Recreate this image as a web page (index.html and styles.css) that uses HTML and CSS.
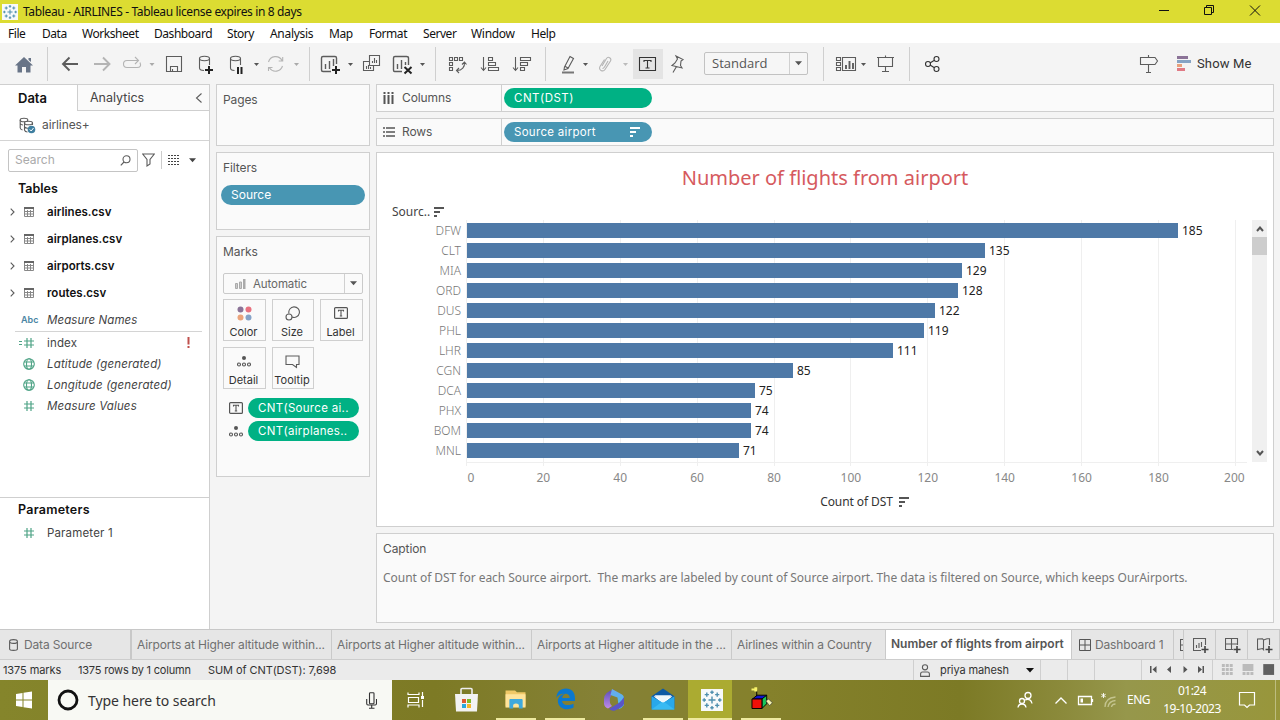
FILE: index.html
```html
<!DOCTYPE html>
<html lang="en">
<head>
<meta charset="utf-8">
<title>Tableau - AIRLINES</title>
<link rel="stylesheet" href="styles.css">
</head>
<body>
<svg class="defs" width="0" height="0">
  <defs>
    <symbol id="caret" viewBox="0 0 8 5"><path d="M0 0H8L4 4.6Z"/></symbol>
    <symbol id="table" viewBox="0 0 10 10"><path d="M.5 1V9.5H9.5V1M.5 4.500H9.5M.5 7H9.5M3.5 3V9.5M6.5 3V9.5" fill="none" stroke="#888"/><path d="M0 0H10V2H0Z" fill="#666"/></symbol>
    <symbol id="tbox" viewBox="0 0 14 12"><rect x=".6" y=".6" width="12.8" height="10.8" rx="1" fill="none" stroke="#555" stroke-width="1.2"/><path d="M4.5 4.5V3.2H9.5V4.5M7 3.2V9M5.8 9H8.2" fill="none" stroke="#555" stroke-width="1.1"/></symbol>
    <symbol id="detail" viewBox="0 0 14 11"><circle cx="7" cy="2" r="2" fill="#555"/><g fill="none" stroke="#555" stroke-width="1.1"><circle cx="2" cy="8.5" r="1.5"/><circle cx="7" cy="8.5" r="1.5"/><circle cx="12" cy="8.5" r="1.5"/></g></symbol>
    <symbol id="sort" viewBox="0 0 10 10"><path d="M0 0H10V2H0ZM0 4H6V6H0ZM0 8H3V10H0Z"/></symbol>
    <symbol id="hash" viewBox="0 0 12 12"><path d="M4 1V11M8 1V11M1 4H11M1 8H11" fill="none" stroke="#4fa386" stroke-width="1.2"/></symbol>
    <symbol id="globe" viewBox="0 0 12 12"><g fill="none" stroke="#4fa386" stroke-width="1.1"><circle cx="6" cy="6" r="5.3"/><ellipse cx="6" cy="6" rx="2.5" ry="5.3"/><path d="M1 4H11M1 8H11"/></g></symbol>
    <symbol id="grid4" viewBox="0 0 12 12"><path d="M.5.5H11.5V11.5H.5ZM6 .5V11.5M.5 6H11.5" fill="none" stroke="#555"/></symbol>
    <symbol id="logo" viewBox="0 0 22 22"><rect width="22" height="22" fill="#f7f9fa"/><g fill="none" stroke="#4f8fae" stroke-width="1.4"><path d="M11 7.5V14.5M7.5 11H14.5"/><path d="M11 1.5V5M9.3 3.2H12.7M11 17V20.5M9.3 18.8H12.7M1.5 11H5M3.2 9.3V12.7M17 11H20.500M18.800 9.300V12.700M5.800 3.500V7.700M3.700 5.600H7.900M16.200 3.500V7.700M14.100 5.600H18.300M5.800 14.300V18.500M3.700 16.400H7.900M16.200 14.300V18.500M14.100 16.400H18.300"/></g></symbol>
  </defs>
</svg>

<header class="titlebar">
  <svg class="app-logo" width="16" height="16"><use href="#logo"/></svg>
  <span class="window-title">Tableau - AIRLINES - Tableau license expires in 8 days</span>
  <svg class="window-buttons" width="140" height="23" viewBox="1140 0 140 23" fill="none" stroke="#111"><path d="M1159 10.500H1169M1204.500 7.500H1211.500V14.500H1204.500ZM1206.500 7V5.500H1213.500V12.500H1212M1250 5.500L1260 15.500M1260 5.500L1250 15.500"/></svg>
</header>

<nav class="menubar">
  <span class="m1">File</span><span class="m2">Data</span><span class="m3">Worksheet</span><span class="m4">Dashboard</span><span class="m5">Story</span><span class="m6">Analysis</span><span class="m7">Map</span><span class="m8">Format</span><span class="m9">Server</span><span class="m10">Window</span><span class="m11">Help</span>
</nav>

<div class="toolbar">
  <svg width="47" height="41" viewBox="0 43 47 41"><path d="M24 57L33 65.500H30.500V72.500H26V67H22V72.500H17.500V65.500H15ZM28.500 58H31V62L28.500 60Z" fill="#687487"/></svg>
  <i class="sep"></i>
  <svg width="38" height="41" viewBox="48 43 38 41"><path d="M78 64H63M69.500 57.500L63 64L69.500 70.500" class="k thick"/></svg>
  <svg width="30" height="41" viewBox="86 43 30 41"><path d="M94 64H109M103 57.500L109.500 64L103 70.500" class="k thick off"/></svg>
  <svg width="44" height="41" viewBox="116 43 44 41"><path d="M129 67.500H127A3.500 3.500 0 0 1 127 60.500H138M135 57L138.500 60.500L135 64M140 62.500Q142 67.500 137 67.500H129" class="k off"/><path d="M149.500 63H154.500L152 66Z" fill="#aaa"/></svg>
  <svg width="32" height="41" viewBox="160 43 32 41"><path d="M166.500 56.500H181.500V71.500H166.500ZM170.500 71.500V66.500H177.500V71.500M172.500 69V71.500" class="k"/></svg>
  <svg width="30" height="41" viewBox="192 43 30 41"><g class="k"><ellipse cx="204.500" cy="58.500" rx="5" ry="2.200"/><path d="M199.500 58.500V68C199.500 69.500 201 70.500 204 70.500M209.500 58.500V65"/></g><path d="M209 66V74M205 70H213" stroke="#222" stroke-width="2"/></svg>
  <svg width="40" height="41" viewBox="222 43 40 41"><g class="k"><ellipse cx="235.500" cy="58.500" rx="5" ry="2.200"/><path d="M230.500 58.500V68C230.500 69.500 232 70.500 234.500 70.500M240.500 58.500V65"/></g><path d="M238 67V74M241.500 67V74" stroke="#222" stroke-width="2"/><path d="M254 63H259L256.500 66Z" fill="#555"/></svg>
  <svg width="47" height="41" viewBox="262 43 47 41"><path d="M268.500 62A7.300 7.300 0 0 1 282 60.500M282.500 66A7.300 7.300 0 0 1 269.500 68M282.700 57V61H278.700M268.500 71V67.500H272.500" class="k off"/><path d="M294 63H299L296.500 66Z" fill="#aaa"/></svg>
  <i class="sep"></i>
  <svg width="50" height="41" viewBox="310 43 50 41"><path d="M331 71.500H323Q321.500 71.500 321.500 70V58Q321.500 56.500 323 56.500H335Q336.500 56.500 336.500 58V64M325.500 64V69M329.500 61V69M333.500 59V66" class="k bold"/><path d="M336 66V74M332 70H340" stroke="#222" stroke-width="2"/><path d="M348 63H353L350.500 66Z" fill="#555"/></svg>
  <svg width="28" height="41" viewBox="360 43 28 41"><path d="M369.500 55.500H379.500V65.500H369.500ZM372.500 63V61M374.500 63V58M376.500 63V60M369 61.500H363.500V70.500H373.500V66M366.500 69V66M368.500 69V65M370.500 69V67" class="k"/></svg>
  <svg width="47" height="41" viewBox="388 43 47 41"><path d="M402 71.500H394.500Q393.500 71.500 393.500 70V58Q393.500 56.500 395 56.500H406.500Q408.500 56.500 408.500 58V65M397.500 64V69M401.500 60V69M405.500 62V65" class="k bold"/><path d="M404.500 67L411.500 73.500M411.500 67L404.500 73.500" stroke="#222" stroke-width="2"/><path d="M420 63H425L422.500 66Z" fill="#555"/></svg>
  <i class="sep"></i>
  <svg width="40" height="41" viewBox="436 43 40 41"><path d="M449.500 57.500H452.500V60.500H449.500ZM454.500 57.500H457.500V60.500H454.500ZM459.500 57.500H462.500V60.500H459.500ZM449.500 62.500H452.500V65.500H449.500ZM449.500 67.500H452.500V70.500H449.500ZM464.500 62C465 67 462 70.500 457 70.500M462 64.500L464.500 62L466.500 64.500M459 68L456.500 70.500L459 73" class="k"/></svg>
  <svg width="32" height="41" viewBox="476 43 32 41"><path d="M483.500 57V70M481 67.500L483.500 70.500L486 67.500M488.500 57.500H492.500V60.500H488.500ZM488.500 62.500H495.500V65.500H488.500ZM488.500 67.500H498.500V70.500H488.500Z" class="k"/></svg>
  <svg width="37" height="41" viewBox="508 43 37 41"><path d="M515.500 57V70M513 67.500L515.500 70.500L518 67.500M520.500 57.500H530.500V60.500H520.500ZM520.500 62.500H527.500V65.500H520.500ZM520.500 67.500H524.500V70.500H520.500Z" class="k"/></svg>
  <i class="sep"></i>
  <svg width="46" height="41" viewBox="546 43 46 41"><path d="M564.500 67L570 56.500L573.500 58.500L568 68.500L564 70Z M564.500 66L568 68" class="k"/><path d="M562 72.500H574" stroke="#777" stroke-width="2"/><path d="M583 63H588L585.500 66Z" fill="#555"/></svg>
  <svg width="41" height="41" viewBox="592 43 41 41"><path d="M602 66L606.500 58.500C608 56 612 58 610.500 61L605 69.500C603 72.500 598 70 600 66.500L604.500 59.500M602.500 68.500C604 69 604.500 67 608 61" class="k off"/><path d="M623 63H628L625.500 66Z" fill="#bbb"/></svg>
  <svg class="pressed" width="30" height="30" viewBox="633 49 30 30"><path d="M639.500 57.500H655.500V70.500H639.500ZM644 62V60.500H651V62M647.500 60.500V68M645.500 68H649.500" class="k dark"/></svg>
  <svg width="41" height="41" viewBox="663 43 41 41"><path d="M676 56.500L683 60L681 61.500L680.500 66L682 68.500L672 66L675 63.500L677.500 59.500ZM676.500 67L673 73" class="k" transform="translate(0 -.5)"/></svg>
  <div class="fit-select"><span>Standard</span><b><svg width="7" height="5"><use href="#caret"/></svg></b></div>
  <div class="gap15"></div>
  <i class="sep"></i>
  <svg width="46" height="41" viewBox="824 43 46 41"><path d="M836.500 57.500H840.500V60.500H836.500ZM836.500 62.500H840.500V65.500H836.500ZM836.500 67.500H840.500V70.500H836.500ZM842.500 57.500H855.500V70.500H842.500Z" class="k"/><path d="M846 69V65M849.500 69V61M853 69V63" class="k thick"/><path d="M861 63H866L863.500 66Z" fill="#555"/></svg>
  <svg width="39" height="41" viewBox="870 43 39 41"><path d="M877 57.500H894M878.500 57.500V66.500H892.500V57.500M885.500 55.500V57M885.500 66.500V71.500M882 71.500H889" class="k"/></svg>
  <i class="sep"></i>
  <svg width="45" height="41" viewBox="910 43 45 41"><g class="k dark"><circle cx="928" cy="64" r="2.500"/><circle cx="936.500" cy="59" r="2.500"/><circle cx="936.500" cy="69" r="2.500"/><path d="M930 63L934 60.500M930 65L934 67.500"/></g></svg>
  <div class="spacer"></div>
  <svg width="36" height="41" viewBox="1136 43 36 41"><path d="M1140.500 57.500H1155L1157.500 61L1155 64.500H1140.500ZM1148.500 55V57M1148.500 65V72.500M1146 72.500H1151" class="k"/></svg>
  <svg width="23" height="41" viewBox="1172 43 23 41"><path d="M1177 56H1188V59H1177Z" fill="#8b7397"/><path d="M1177 60H1191V63H1177Z" fill="#86a3c4"/><path d="M1177 64H1182V67H1177Z" fill="#e8a17c"/><path d="M1177 68H1185V71H1177Z" fill="#e07a85"/></svg>
  <span class="show-me">Show Me</span>
</div>

<main class="workspace">
  <aside class="data-pane">
    <div class="pane-tabs"><b>Data</b><div class="analytics"><span>Analytics</span><svg width="8" height="10" viewBox="0 0 8 10"><path d="M6.500 .5L1.500 5L6.500 9.500" class="k"/></svg></div></div>
    <div class="source"><svg width="17" height="17" viewBox="0 0 17 17"><g class="k"><ellipse cx="5" cy="3" rx="3.800" ry="1.800"/><path d="M1.200 3V11Q1.500 12.500 3.500 13M1.200 6.500Q2 8 4 8"/><ellipse cx="9.500" cy="6" rx="4" ry="1.800" fill="#fff"/><path d="M5.500 6V13Q6 15 8.500 15M13.500 6V8M5.500 10Q7 11.500 9 11.300"/></g><circle cx="12.500" cy="12.500" r="3.800" fill="#3f7fa0"/><path d="M10.800 12.500L12.200 14L14.500 11" stroke="#fff" fill="none"/></svg><span>airlines+</span></div>
    <div class="search-row">
      <div class="search"><span>Search</span><svg width="11" height="11" viewBox="0 0 11 11"><circle cx="6.500" cy="4.300" r="3.500" class="k"/><path d="M4 7L.8 10.300" class="k"/></svg></div>
      <svg width="13" height="14" viewBox="0 0 13 14"><path d="M.7 1H12.300L8 6.500V11L5 13V6.500Z" class="k"/></svg>
      <i></i>
      <svg width="12" height="10" viewBox="0 0 12 10"><path d="M0 .5H12M0 3.500H12M0 6.500H12M0 9.500H12" stroke="#444" stroke-dasharray="2 1"/></svg>
      <svg class="dd" width="7" height="5"><use href="#caret"/></svg>
    </div>
    <h3 class="pane-h">Tables</h3>
    <div class="tbl"><svg class="chev" width="5" height="8" viewBox="0 0 5 8"><path d="M.7.7L4 4L.7 7.300" class="k"/></svg><svg width="10" height="10"><use href="#table"/></svg><b>airlines.csv</b></div>
    <div class="tbl"><svg class="chev" width="5" height="8" viewBox="0 0 5 8"><path d="M.7.7L4 4L.7 7.300" class="k"/></svg><svg width="10" height="10"><use href="#table"/></svg><b>airplanes.csv</b></div>
    <div class="tbl"><svg class="chev" width="5" height="8" viewBox="0 0 5 8"><path d="M.7.7L4 4L.7 7.300" class="k"/></svg><svg width="10" height="10"><use href="#table"/></svg><b>airports.csv</b></div>
    <div class="tbl"><svg class="chev" width="5" height="8" viewBox="0 0 5 8"><path d="M.7.7L4 4L.7 7.300" class="k"/></svg><svg width="10" height="10"><use href="#table"/></svg><b>routes.csv</b></div>
    <div class="field names"><span class="abc">Abc</span><em>Measure Names</em></div>
    <div class="field"><svg width="16" height="12" viewBox="-4 0 16 12"><path d="M-4 4.500H-1M-4 7.500H-1" stroke="#4fa386"/><use href="#hash" width="12" height="12"/></svg><span>index</span><svg class="warn" width="3" height="11" viewBox="0 0 3 11"><path d="M.5 0H2.500V7.500H.5ZM.5 9H2.500V11H.5Z" fill="#c0504d"/></svg></div>
    <div class="field"><svg width="12" height="12"><use href="#globe"/></svg><em>Latitude (generated)</em></div>
    <div class="field"><svg width="12" height="12"><use href="#globe"/></svg><em>Longitude (generated)</em></div>
    <div class="field"><svg width="12" height="12"><use href="#hash"/></svg><em>Measure Values</em></div>
    <div class="params">
      <h3 class="pane-h">Parameters</h3>
      <div class="field"><svg width="12" height="12"><use href="#hash"/></svg><span>Parameter 1</span></div>
    </div>
  </aside>

  <section class="cards">
    <div class="card pages"><h4>Pages</h4></div>
    <div class="card filters"><h4>Filters</h4><div class="pill blue">Source</div></div>
    <div class="card marks"><h4>Marks</h4>
      <div class="mark-type"><svg width="11" height="10" viewBox="0 0 11 10"><path d="M.5 4.500H2.500V9.500H.5ZM4.500 3H6.500V9.500H4.500Z" fill="#ccc" stroke="#aaa"/><path d="M8 0H10.500V10H8Z" fill="#aaa"/></svg><span>Automatic</span><b><svg width="7" height="5"><use href="#caret"/></svg></b></div>
      <div class="mark-grid">
        <div><svg width="15" height="15" viewBox="0 0 15 15"><circle cx="3.500" cy="3.500" r="3" fill="#8b7397"/><circle cx="11.500" cy="3.500" r="3" fill="#e8717f"/><circle cx="3.500" cy="11.500" r="3" fill="#eba47c"/><circle cx="11.500" cy="11.500" r="3" fill="#86a3c8"/></svg><span>Color</span></div>
        <div><svg width="15" height="15" viewBox="0 0 15 15"><g class="k"><path d="M4 7.500A5.300 5.300 0 1 1 7 11"/><circle cx="4" cy="11" r="3"/></g></svg><span>Size</span></div>
        <div><svg width="14" height="15" viewBox="0 0 14 15"><use href="#tbox" width="14" height="12" y="1"/></svg><span>Label</span></div>
        <div><svg width="14" height="15" viewBox="0 0 14 15"><use href="#detail" width="14" height="11" y="2"/></svg><span>Detail</span></div>
        <div><svg width="15" height="15" viewBox="0 0 15 15"><path d="M1 2H14V10.500H11.500V13.500L7.500 10.500H1Z" class="k"/></svg><span>Tooltip</span></div>
      </div>
      <div class="mark-pill"><svg width="14" height="12"><use href="#tbox"/></svg><div class="pill green">CNT(Source ai..</div></div>
      <div class="mark-pill"><svg width="14" height="11"><use href="#detail"/></svg><div class="pill green p2">CNT(airplanes..</div></div>
    </div>
  </section>

  <section class="view">
    <div class="shelf"><div class="shelf-label"><svg width="12" height="12" viewBox="0 0 12 12"><path d="M1.500 0V2M1.500 3V12M5.500 0V2M5.500 3V12M9.500 0V2M9.500 3V12" stroke="#555" stroke-width="2"/></svg><span>Columns</span></div><div class="pill green dst">CNT(DST)</div></div>
    <div class="shelf"><div class="shelf-label"><svg width="12" height="12" viewBox="0 0 12 12"><path d="M0 2H2M3 2H12M0 6H2M3 6H12M0 10H2M3 10H12" stroke="#555" stroke-width="1.600"/></svg><span>Rows</span></div><div class="pill blue">Source airport<svg width="10" height="10" fill="#fff"><use href="#sort"/></svg></div></div>

    <div class="sheet">
      <h1>Number of flights from airport</h1>
      <div class="row-header"><span>Sourc..</span><svg width="10" height="10" fill="#555"><use href="#sort"/></svg></div>
      <div class="plot">
        <div class="gridlines"><i></i><i></i><i></i><i></i><i></i><i></i><i></i><i></i><i></i><i></i><i></i></div>
        <div class="bars">
          <div class="bar"><span>DFW</span><i style="width:711px"></i><b>185</b></div>
          <div class="bar"><span>CLT</span><i style="width:518px"></i><b>135</b></div>
          <div class="bar"><span>MIA</span><i style="width:495px"></i><b>129</b></div>
          <div class="bar"><span>ORD</span><i style="width:491px"></i><b>128</b></div>
          <div class="bar"><span>DUS</span><i style="width:468px"></i><b>122</b></div>
          <div class="bar"><span>PHL</span><i style="width:457px"></i><b>119</b></div>
          <div class="bar"><span>LHR</span><i style="width:426px"></i><b>111</b></div>
          <div class="bar"><span>CGN</span><i style="width:326px"></i><b>85</b></div>
          <div class="bar"><span>DCA</span><i style="width:288px"></i><b>75</b></div>
          <div class="bar"><span>PHX</span><i style="width:284px"></i><b>74</b></div>
          <div class="bar"><span>BOM</span><i style="width:284px"></i><b>74</b></div>
          <div class="bar"><span>MNL</span><i style="width:272px"></i><b>71</b></div>
        </div>
        <div class="scroll"><svg width="8" height="6" viewBox="0 0 8 6"><path d="M1 5L4 1.500L7 5" fill="none" stroke="#555" stroke-width="2"/></svg><i></i><svg width="8" height="6" viewBox="0 0 8 6"><path d="M1 1L4 4.500L7 1" fill="none" stroke="#555" stroke-width="2"/></svg></div>
      </div>
      <div class="ticks"><span>0</span><span>20</span><span>40</span><span>60</span><span>80</span><span>100</span><span>120</span><span>140</span><span>160</span><span>180</span><span>200</span></div>
      <div class="axis-title"><span>Count of DST</span><svg width="10" height="10" fill="#555"><use href="#sort"/></svg></div>
    </div>

    <div class="caption"><h4>Caption</h4><p>Count of DST for each Source airport.&nbsp; The marks are labeled by count of Source airport. The data is filtered on Source, which keeps OurAirports.</p></div>
  </section>
</main>

<div class="sheet-tabs">
  <div class="t-src"><svg width="9" height="12" viewBox="0 0 9 12"><path d="M.6 2.500V10Q.6 11.400 4.500 11.400T8.400 10V2.500Q8.400 .6 4.500 .6T.6 2.500Q.6 4.400 4.500 4.400T8.400 2.500" class="k"/></svg><span>Data Source</span></div>
  <div class="t-wide"><span>Airports at Higher altitude within...</span></div>
  <div class="t-wide"><span>Airports at Higher altitude within...</span></div>
  <div class="t-wide"><span>Airports at Higher altitude in the ...</span></div>
  <div class="t-country"><span>Airlines within a Country</span></div>
  <div class="t-active"><b>Number of flights from airport</b></div>
  <div class="t-dash"><svg width="12" height="12"><use href="#grid4"/></svg><span>Dashboard 1</span></div>
  <div class="t-cut"><svg width="4" height="12" viewBox="0 0 4 12"><path d="M4 .5H.5V11.500H4M.5 6H4" class="k"/></svg></div>
  <div class="t-new"><svg width="16" height="16" viewBox="0 0 16 16"><path d="M8 12.500H.5V.5H12.500V7M3.500 10V7M6 10V5M8.500 9V4" class="k"/><path d="M12 8V15M8.500 11.500H15.500" stroke="#444" stroke-width="1.600"/></svg></div>
  <div class="t-new"><svg width="16" height="16" viewBox="0 0 16 16"><path d="M8 11.500H.5V.5H12.500V7M6.500 .5V11.500M.5 6H12.500" class="k"/><path d="M12 8V15M8.500 11.500H15.500" stroke="#444" stroke-width="1.600"/></svg></div>
  <div class="t-new"><svg width="16" height="16" viewBox="0 0 16 16"><path d="M7 12.500L5.500 10.500L.5 11.500V1L5.500 .7L6.500 2V11.500M6.500 2L10 .7H12.500V7" class="k"/><path d="M12 8V15M8.500 11.500H15.500" stroke="#444" stroke-width="1.600"/></svg></div>
</div>

<div class="statusbar">
  <span class="s1">1375 marks</span><span class="s2">1375 rows by 1 column</span><span class="s3">SUM of CNT(DST): 7,698</span>
  <div class="spacer"></div>
  <div class="user"><svg width="10" height="13" viewBox="0 0 10 13"><circle cx="5" cy="3.300" r="2.600" class="k"/><path d="M.6 12.400V10Q.6 8 2.500 8H7.500Q9.400 8 9.400 10V12.400Z" class="k"/></svg><span>priya mahesh</span><svg class="dd" width="8" height="5"><use href="#caret"/></svg></div>
  <div class="cell"></div><div class="cell"></div><div class="cell wide"></div>
  <svg class="pager" width="71" height="20" viewBox="1142 660 71 20" fill="#555"><path d="M1150 666H1151.500V673H1150ZM1156.500 666V673L1152.500 669.500ZM1171 666V673L1167 669.500ZM1183.500 666V673L1187.500 669.500ZM1198 666V673L1202 669.500ZM1202.500 666H1204V673H1202.500Z"/></svg>
  <svg class="pager bordered" width="68" height="20" viewBox="1212 660 68 20"><path d="M1221 664H1224V667H1221ZM1225 664H1228V667H1225ZM1229 664H1232V667H1229ZM1221 668H1224V671H1221ZM1225 668H1228V671H1225ZM1229 668H1232V671H1229ZM1221 672H1224V675H1221ZM1225 672H1228V675H1225ZM1229 672H1232V675H1229ZM1242 664H1253V671H1242ZM1242 672H1245V675H1242ZM1246 672H1249V675H1246ZM1250 672H1253V675H1250Z" fill="#bbb"/><path d="M1263 664H1274V675H1263Z" fill="#606060"/></svg>
</div>

<footer class="taskbar">
  <svg class="start" width="48" height="40" viewBox="0 680 48 40"><path d="M16 694L22.500 693V699.500H16ZM23.500 692.800L32 691.500V699.500H23.500ZM16 700.500H22.500V707L16 706ZM23.500 700.500H32V708.500L23.500 707.200Z" fill="#fff"/></svg>
  <div class="task-search"><svg width="22" height="22" viewBox="0 0 22 22"><circle cx="11" cy="11" r="9" fill="none" stroke="#111" stroke-width="2.800"/></svg><span>Type here to search</span><svg width="11" height="17" viewBox="0 0 11 17"><rect x="3.500" y=".7" width="4.500" height="11" rx=".8" class="k dark"/><path d="M.7 7V11.500Q.7 13 2 13H9.200Q10.500 13 10.500 11.500V7M5.700 13V16M3 16.200H8.500" class="k dark"/></svg></div>
  <svg width="49" height="40" viewBox="392 680 49 40" fill="none" stroke="#fff" stroke-width="1.200"><path d="M408 692.500V694.500H419V692.500M408 707.500V705H419V707.500M408.500 697.500H418.500V702.500H408.500ZM422.500 692V696M422.500 700V707"/><path d="M421 696H424V699H421Z" fill="#fff" stroke="none"/></svg>
  <svg width="50" height="40" viewBox="441 680 50 40"><path d="M461 694V689.500Q461 688.500 462 688.500H471Q472 688.500 472 689.500V694" fill="none" stroke="#eee" stroke-width="1.600"/><path d="M455 694H478L477 711.500H456Z" fill="#f2f2f2"/><path d="M462 699H466V703H462Z" fill="#dd5a35"/><path d="M467 699H471V703H467Z" fill="#80ba28"/><path d="M462 704H466V708H462Z" fill="#28a8e0"/><path d="M467 704H471V708H467Z" fill="#f5b72b"/></svg>
  <svg class="run" width="40" height="40" viewBox="496 680 40 40"><path d="M505 691H515L517 693H526V708H505Z" fill="#f1c967"/><path d="M505 695H526V709H505Z" fill="#ffe49b"/><path d="M509 710V701Q509 700 510 700H522Q523 700 523 701V710H519V706Q516 703.500 513 706V710Z" fill="#3fa9dc"/></svg>
  <svg class="run edge" width="40" height="40" viewBox="545 680 40 40"><path d="M556 699C556 693 560 689 566 689C572 689 575.500 693 575.500 699V702H562C562 706 568 708 574 705V709C566 713 558 709.500 557.500 702.500C557.500 698 561 695.500 564 694.500C559 694.500 557 697 556 699ZM562 699H570C570 695.500 567.500 694.500 566 694.500C564 694.500 562.500 696 562 699Z" fill="#0a78d0"/></svg>
  <svg width="58" height="40" viewBox="585 680 58 40"><defs><linearGradient id="g1" x2="0" y2="1"><stop stop-color="#6aa8ee"/><stop offset="1" stop-color="#49c0e8"/></linearGradient><linearGradient id="g2" x2="0" y2="1"><stop stop-color="#5b4fb8"/><stop offset="1" stop-color="#c08be8"/></linearGradient></defs><path d="M614 689.500Q604 692 604 699V704Q604.500 707 608 708.500L612 706Q609 703 610 698Z" fill="url(#g2)"/><path d="M612 689L622 694.500Q624.500 696 624 700V705Q622 708 619 709L617.500 697.500L610.500 695Z" fill="url(#g1)"/><path d="M609 709L619.500 702.500Q621.500 701 624 697V704Q623.500 706 620 708L615 710.500Q612 711.500 609 709Z" fill="#5a55c8"/></svg>
  <svg class="run mail" width="40" height="40" viewBox="643 680 40 40"><path d="M651 697L663 689L675 697V710H651Z" fill="#0c59a4"/><path d="M653 697H673L663 705Z" fill="#fff"/><path d="M651 697L663 704L675 697V711H651Z" fill="#28a8ea"/><path d="M651 711L663 702L675 711Z" fill="#38baf3"/><path d="M654 696H672L663 704Z" fill="#edf6fb"/></svg>
  <div class="running-app"><svg width="22" height="22"><use href="#logo"/></svg></div>
  <svg class="run cube" width="40" height="40" viewBox="741 680 40 40"><path d="M752 700L757 696H767L763 700Z" fill="#1010d0" stroke="#000"/><path d="M762 700L767 696V705L762 710Z" fill="#19c65a" stroke="#000"/><path d="M751.500 700H762V710H751.500Z" fill="#f01008" stroke="#000"/><path d="M756.500 697V691" stroke="#000"/><path d="M751 689H754V687.500H757V692H754V691H751Z" fill="#f8f36a"/><path d="M766 702L769 700L773 704L770 707Z" fill="#f4f3ae" stroke="#333" stroke-width=".7"/></svg>
  <div class="spacer"></div>
  <svg width="142" height="40" viewBox="980 680 142 40" fill="none" stroke="#fff" stroke-width="1.300"><circle cx="1028" cy="695.500" r="3"/><circle cx="1022" cy="701" r="2.500"/><path d="M1018 707.500Q1018.500 704 1022 704T1026 707.500M1025 700Q1031 698 1032 703.500M1055.500 703.500L1061 698L1066.500 703.500M1078.500 696.500H1091.500V704.500H1078.500ZM1092.500 699V702"/><path d="M1080.500 698.500H1083V702.500H1080.500Z" fill="#fff" stroke="none"/><path d="M1105 707Q1105 698 1115.500 697M1108 707Q1109 701 1115.500 700.500M1111.500 707Q1112 704 1115.500 704" stroke="#c4c48f"/><path d="M1103.500 693V698M1101.300 694.200L1105.700 696.800M1105.700 694.200L1101.300 696.800" stroke-width=".9"/></svg>
  <span class="lang">ENG</span>
  <div class="clock"><span>01:24</span><span>19-10-2023</span></div>
  <svg width="54" height="40" viewBox="1226 680 54 40" fill="none" stroke="#fff" stroke-width="1.200"><path d="M1239.500 692.500H1254.500V705H1249.500L1247 707.500L1244.500 705H1239.500Z"/><path d="M1275.500 680V720" stroke="#bdbd80" stroke-width="1"/></svg>
</footer>
</body>
</html>
```

FILE: styles.css
```css
* { box-sizing: border-box; }
body { margin: 0; width: 1280px; height: 720px; overflow: hidden; display: flex; flex-direction: column; background: #f4f4f4; font: 12px/16px Inter, "Liberation Sans", sans-serif; color: #333; }
svg { display: block; flex: none; }
.defs { position: absolute; }
i { font-style: normal; display: block; flex: none; }
h1, h3, h4, p { margin: 0; font-weight: 400; }
.k { fill: none; stroke: #5c5c5c; stroke-width: 1.1; }
g.k ellipse[fill] { fill: #fff; }
.bold { stroke-width: 1.4; }
.thick { stroke-width: 1.9; }
.off { stroke: #b4b4b4; }
.dark { stroke: #333; }
.spacer { flex: 1; }

.titlebar { height: 23px; flex: none; background: #dcdc32; display: flex; align-items: center; padding-left: 2px; font: 12px/22px "Noto Sans", sans-serif; color: #111; }
.window-title { margin-left: 5px; letter-spacing: -.36px; white-space: nowrap; }
.window-buttons { margin-left: auto; }

.menubar { height: 20px; flex: none; background: #fff; display: flex; font: 12px/21px "Noto Sans", sans-serif; color: #111; padding-left: 8px; letter-spacing: -.45px; }
.menubar span { flex: none; }
.m1 { width: 34px; } .m2 { width: 40px; } .m3 { width: 72px; } .m4 { width: 73px; } .m5 { width: 43px; } .m6 { width: 59px; letter-spacing: -.3px; } .m7 { width: 40px; } .m8 { width: 54px; } .m9 { width: 48px; } .m10 { width: 60px; letter-spacing: -.3px; }

.toolbar { height: 41px; flex: none; display: flex; align-items: center; background: #f4f4f4; }
.sep { width: 1px; height: 34px; background: #cfcfcf; }
.pressed { background: #e4e4e4; }
.fit-select { width: 104px; height: 23px; flex: none; border: 1px solid #c2c2c2; border-radius: 2px; background: #f6f6f6; display: flex; }
.fit-select span { flex: 1; padding-left: 7px; font: 13px/21px "Open Sans", sans-serif; color: #555; }
.fit-select b, .mark-type b { width: 18px; border-left: 1px solid #d0d0d0; display: flex; align-items: center; justify-content: center; fill: #555; }
.gap15 { width: 15px; }
.show-me { width: 85px; padding-left: 2px; font: 13px/20px Roboto, sans-serif; letter-spacing: .15px; color: #333; }

.workspace { height: 545px; flex: none; display: flex; }
.data-pane { width: 210px; flex: none; background: #fff; border-right: 1px solid #cfcfcf; border-top: 1px solid #cfcfcf; display: flex; flex-direction: column; }
.pane-tabs { height: 26px; display: flex; flex: none; font-size: 12.500px; }
.pane-tabs > b { width: 77px; padding-left: 18px; line-height: 26px; font-size: 13px; font-weight: 600; color: #111; }
.analytics { flex: 1; display: flex; align-items: center; justify-content: space-between; padding: 0 6px 0 12px; background: #fafafa; border-left: 1px solid #cfcfcf; border-bottom: 1px solid #cfcfcf; color: #444; }
.source { height: 30px; flex: none; border-bottom: 1px solid #d4d4d4; display: flex; align-items: center; padding: 0 0 1px 19px; color: #555; }
.source span { margin-left: 6px; letter-spacing: -.1px; }
.search-row { height: 37px; flex: none; display: flex; align-items: center; padding: 1px 0 0 8px; }
.search { width: 130px; height: 23px; border: 1px solid #c4c4c4; border-radius: 2px; display: flex; align-items: center; justify-content: space-between; padding: 0 6px; color: #aaa; margin-right: 4px; }
.search-row > i { width: 1px; height: 18px; background: #ccc; margin: 0 6px; }
.dd { fill: #444; }
.search-row .dd { margin-left: 9px; }
.pane-h { height: 20px; flex: none; padding-left: 18px; font: 600 12.500px/21px Inter, sans-serif; color: #111; }
.tbl { height: 27px; flex: none; display: flex; align-items: center; padding-left: 10px; color: #111; }
.tbl .chev { margin-right: 9px; }
.tbl b { margin-left: 13px; font-weight: 600; font-size: 11.500px; letter-spacing: .04px; }
.field { height: 21px; flex: none; display: flex; align-items: center; padding-left: 23px; font-size: 11.500px; color: #444; letter-spacing: .16px; }
.field > svg + span, .field > svg + em { margin-left: 12px; }
.field svg[width="16"] { margin-left: -4px; }
.field .warn { margin-left: auto; margin-right: 19px; }
.names { height: 26px; margin: 0 7px 0 15px; padding: 2px 0 0 6px; border-bottom: 1px solid #d4d4d4; letter-spacing: .08px; }
.abc { width: 26px; font: 600 9px/12px Inter, sans-serif; letter-spacing: 0; color: #4b86a4; }
.params { margin-top: auto; height: 132px; flex: none; border-top: 1px solid #cfcfcf; padding-top: 1px; }
.params .pane-h { height: 23px; line-height: 22px; letter-spacing: .25px; }

.cards { width: 154px; margin-left: 6px; flex: none; display: flex; flex-direction: column; gap: 6px; }
.card { border: 1px solid #cfcfcf; background: #fafafa; padding: 7px 6px; flex: none; }
.card h4, .caption h4 { font-size: 12px; line-height: 16px; color: #555; letter-spacing: -.1px; }
.pages { height: 62px; } .filters { height: 78px; } .marks { height: 241px; }
.pill { height: 20px; border-radius: 10px; color: #fff; font-size: 12px; line-height: 20px; padding: 0 10px; white-space: nowrap; }
.blue { background: #4896b3; } .green { background: #00b184; }
.filters .pill { margin: 9px -2px 0; }
.mark-type { height: 21px; margin-top: 13px; border: 1px solid #cacaca; border-radius: 2px; display: flex; align-items: center; color: #666; font-size: 11.500px; letter-spacing: -.1px; }
.mark-type > svg { margin-left: 11px; }
.mark-type span { flex: 1; padding-left: 7px; }
.mark-type b { align-self: stretch; }
.mark-grid { display: grid; grid-template-columns: 43px 42px 43px; justify-content: space-between; gap: 6px 0; margin-top: 5px; }
.mark-grid div { height: 42px; border: 1px solid #cfcfcf; display: flex; flex-direction: column; align-items: center; padding-top: 6px; font-size: 11px; line-height: 15px; color: #333; white-space: nowrap; }
.mark-grid span { margin: 4px 2px 0 0; }
.mark-grid svg { margin-right: 1px; }
.mark-pill { display: flex; align-items: center; padding: 0 4px 0 6px; margin-top: 3px; }
.mark-grid + .mark-pill { margin-top: 9px; }
.mark-pill .pill { width: 111px; margin-left: 5px; font-size: 11.500px; letter-spacing: .3px; }

.view { width: 898px; margin-left: 6px; display: flex; flex-direction: column; flex: none; }
.shelf { height: 28px; margin-bottom: 6px; flex: none; border: 1px solid #cfcfcf; background: #fafafa; display: flex; align-items: center; }
.shelf-label { width: 125px; height: 26px; border-right: 1px solid #cfcfcf; display: flex; align-items: center; padding-left: 6px; color: #555; margin-right: 2px; }
.shelf-label span { margin-left: 7px; letter-spacing: -.1px; }
.shelf .pill { width: 148px; font-size: 11.500px; letter-spacing: .3px; display: flex; justify-content: space-between; align-items: center; padding-right: 12px; }
.shelf .dst { letter-spacing: .5px; }

.sheet { height: 375px; flex: none; border: 1px solid #cfcfcf; background: #fff; font-family: "Noto Sans", sans-serif; }
.sheet h1 { padding-top: 11px; text-align: center; font: 20px/28px "Noto Sans", sans-serif; color: #d65a5e; }
.row-header { display: flex; align-items: center; height: 16px; margin-top: 12px; padding-left: 15px; font-size: 12px; color: #444; }
.row-header svg { margin-left: 4px; }
.plot { position: relative; height: 243px; display: flex; }
.gridlines { position: absolute; left: 89px; top: 0; height: 246px; display: flex; z-index: 0; }
.gridlines i { width: 76.900px; border-left: 1px solid #efefef; }
.gridlines i:last-child { width: 12px; }
.gridlines::after { content: ""; position: absolute; left: 0; right: 0; top: 242px; height: 1px; background: #efefef; }
.bars { position: relative; width: 875px; padding-top: .5px; }
.bar { height: 20px; display: flex; align-items: center; font-size: 12px; }
.bar span { width: 84px; margin-right: 6px; text-align: right; color: #777; font-weight: 300; }
.bar i { height: 15px; background: #4e79a7; }
.bar b { margin-left: 4px; font-weight: 400; color: #222; }
.scroll { width: 15px; height: 242px; background: #f0f0f0; display: flex; flex-direction: column; align-items: center; padding: 6px 0; }
.scroll i { width: 15px; height: 18px; background: #cdcdcd; margin: 5px 0 auto; }
.ticks { display: flex; height: 18px; margin-top: 5px; padding-left: 51px; font-size: 12px; line-height: 19px; color: #888; }
.ticks span { width: 76.900px; flex: none; text-align: center; }
.ticks span:first-child { padding-left: 9px; }
.ticks span:last-child { padding-right: 2px; }
.axis-title { display: flex; align-items: center; justify-content: center; height: 16px; margin-top: 8px; padding-left: 79px; font-size: 12px; letter-spacing: -.08px; color: #333; }
.axis-title svg { margin-left: 6px; }

.caption { height: 90px; margin-top: 6px; flex: none; border: 1px solid #cfcfcf; background: #fafafa; padding: 7px 6px; }
.caption p { margin-top: 13px; font: 12px/16px "Noto Sans", sans-serif; letter-spacing: -.035px; color: #777; white-space: nowrap; }

.sheet-tabs { height: 31px; flex: none; border-top: 1px solid #c8c8c8; border-bottom: 1px solid #cdcdcd; background: #e6e6e6; display: flex; font: 12px/29px Inter, sans-serif; color: #707070; letter-spacing: -.15px; }
.sheet-tabs > div { flex: none; border-right: 1px solid #cacaca; display: flex; align-items: center; white-space: nowrap; overflow: hidden; }
.sheet-tabs .t-src { width: 132px; padding-left: 9px; border-right: 2px solid #c8c8c8; }
.t-src span { margin-left: 6px; }
.t-wide { width: 200px; padding-left: 5px; }
.t-country { width: 154px; padding-left: 5px; }
.t-active { width: 186px; padding-left: 5px; background: #fff; color: #555; letter-spacing: -.02px; }
.t-active b { font-weight: 600; font-size: 12px; line-height: 27px; padding-bottom: 2px; }
.t-dash { width: 102px; padding-left: 7px; }
.t-dash span { margin-left: 4px; }
.t-cut { width: 10px; padding-left: 6px; }
.t-new { width: 32px; padding: 2px 0 0 9px; }

.statusbar { height: 20px; flex: none; background: #ebebeb; display: flex; font: 11px/20px Inter, sans-serif; color: #333; padding-left: 3px; white-space: nowrap; }
.s1 { width: 75px; letter-spacing: -.1px; } .s2 { width: 130px; letter-spacing: -.2px; } .s3 { letter-spacing: -.08px; }
.user { width: 128px; border: solid #cfcfcf; border-width: 0 1px; display: flex; align-items: center; padding-left: 6px; }
.user span { margin-left: 10px; flex: 1; letter-spacing: -.1px; }
.user .dd { margin-right: 6px; fill: #111; }
.cell { width: 27px; border-right: 1px solid #cfcfcf; }
.cell.wide { width: 47px; }
.pager { margin-right: -1px; }
.bordered { border-left: 1px solid #cfcfcf; margin-right: 0; }

.taskbar { height: 40px; flex: none; display: flex; align-items: center; background: linear-gradient(90deg, #85852b 0, #7d7a25 34%, #858136 47%, #85812b 60%, #7c7a25 75%, #8b8a3b 83%, #96974b 88%, #98963b 100%); color: #fff; }
.task-search { width: 344px; height: 40px; background: #f8f9f4; display: flex; align-items: center; padding: 0 15px 0 9px; font: 14px/40px "Noto Sans", sans-serif; letter-spacing: -.06px; color: #333; }
.task-search span { flex: 1; margin-left: 9px; padding-top: 1px; }
.run { border-bottom: 2px solid #eeeaa0; margin-left: 5px; }
.edge, .cube { margin-left: 9px; }
.mail { margin-left: 0; }
.running-app { width: 44px; height: 40px; margin-left: 5px; background: #abab31; border-bottom: 2px solid #eeeaa0; display: flex; align-items: center; justify-content: center; padding: 2px 0 0 3px; }
.lang { width: 34px; margin-left: 5px; font: 12px/40px "Noto Sans", sans-serif; letter-spacing: -.5px; }
.clock { width: 65px; padding-right: 3px; text-align: center; display: flex; flex-direction: column; font: 12px/18px "Noto Sans", sans-serif; letter-spacing: -.5px; }
```
